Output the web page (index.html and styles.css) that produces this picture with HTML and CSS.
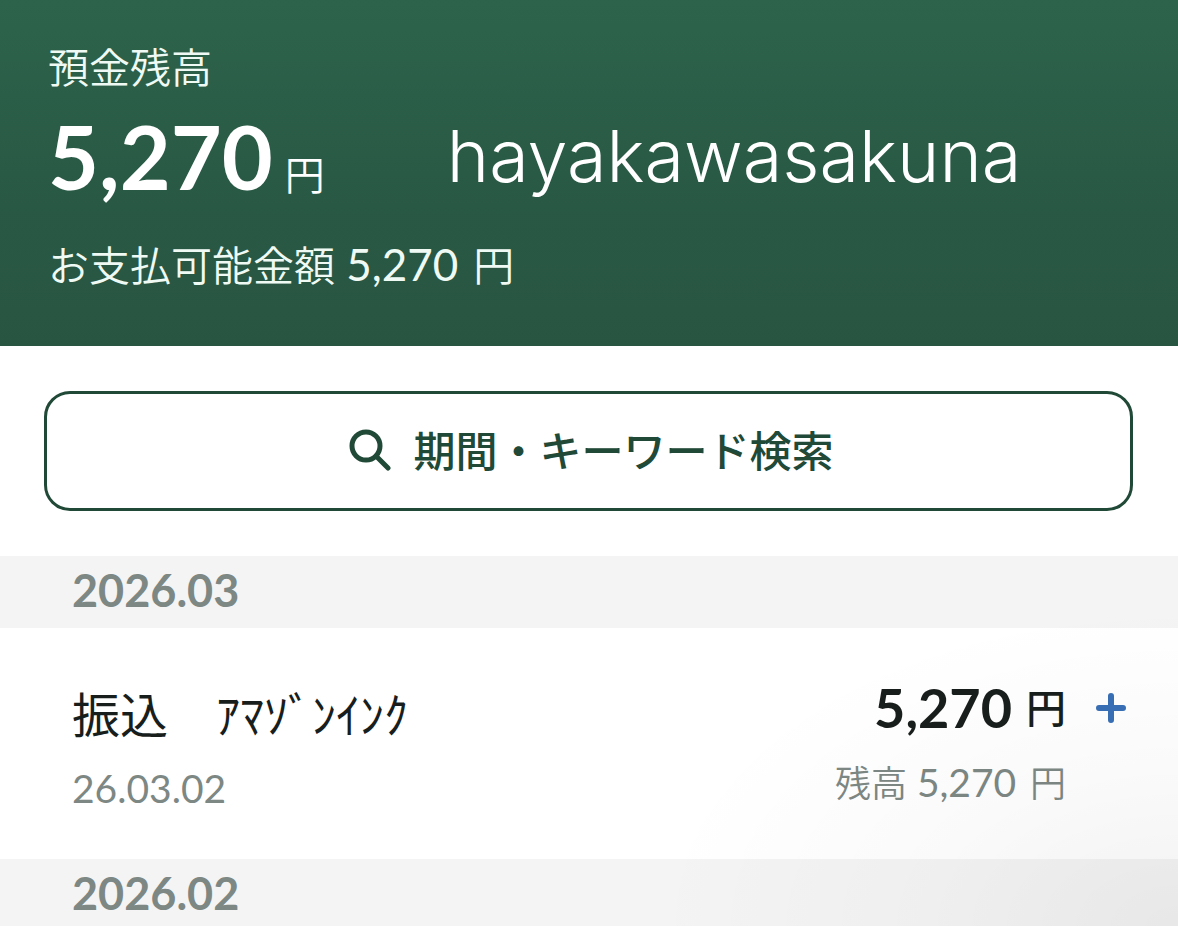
FILE: index.html
```html
<!DOCTYPE html>
<html lang="ja">
<head>
    <meta charset="utf-8">
    <meta name="viewport" content="width=device-width, initial-scale=1">
    <title>預金残高</title>
    <link rel="stylesheet" href="styles.css">
</head>
<body>

<header class="balance">
    <div class="balance-label">預金残高</div>
    <div class="balance-row">
        <div class="balance-amount"><strong>5,270</strong><span class="yen">円</span></div>
        <div class="user-name">hayakawasakuna</div>
    </div>
    <div class="balance-label">お支払可能金額 <span class="num">5,270</span> 円</div>
</header>

<main>
    <div class="search">
        <button type="button" class="search-button">
            <svg class="search-icon" viewBox="0 0 42 42" aria-hidden="true">
                <circle cx="17" cy="17" r="14"/>
                <path d="M27 27L39 39"/>
            </svg>
            期間・キーワード検索
        </button>
    </div>

    <section>
        <h2 class="month">2026.03</h2>
        <div class="entry">
            <div class="entry-info">
                <div class="entry-title">振込　ｱﾏｿﾞﾝｲﾝｸ</div>
                <div class="entry-date">26.03.02</div>
            </div>
            <div class="entry-money">
                <div class="entry-amount"><strong>5,270</strong><span class="yen">円</span></div>
                <div class="entry-rest">残高 <span class="num">5,270</span> 円</div>
            </div>
            <svg class="plus-icon" viewBox="0 0 30 30" aria-hidden="true">
                <path d="M15 3v24M3 15h24"/>
            </svg>
        </div>
    </section>

    <section>
        <h2 class="month">2026.02</h2>
    </section>
</main>

</body>
</html>
```
FILE: styles.css
```css
html, body {
    margin: 0;
    padding: 0;
}
body {
    height: 100vh;
    overflow: hidden;
    background: #fff;
    color: #181e1c;
    font-family: Lato, "Noto Sans CJK JP", sans-serif;
    font-weight: 350;
    position: relative;
}
/* soft shade in the lower right corner */
body::after {
    content: "";
    position: absolute;
    right: 0;
    bottom: 0;
    width: 45%;
    height: 35%;
    background: radial-gradient(ellipse farthest-side at 100% 100%, rgba(0, 0, 0, 0.05), rgba(0, 0, 0, 0.02) 50%, transparent);
    pointer-events: none;
}
.num {
    margin-right: 4px;
    font-family: Lato, sans-serif;
    font-weight: 400;
}

/* balance */
.balance {
    padding: 38px 48px 50px;
    background: linear-gradient(#2d634b, #295a45 50%, #285542);
    color: #fff;
}
.balance-label {
    font-size: 41px;
    line-height: 60px;
    color: #f0faf5;
}
.balance-row {
    display: flex;
    align-items: flex-start;
    gap: 122px;
    height: 136px;
}
.balance-amount {
    display: flex;
    align-items: baseline;
    gap: 12px;
    line-height: 116px;
}
.balance-amount strong {
    font-size: 88px;
    font-weight: 700;
}
.balance-amount .yen {
    font-size: 40px;
}
.balance-label .num {
    font-size: 44px;
}
.user-name {
    font-family: Inter, sans-serif;
    font-size: 72px;
    font-weight: 300;
    line-height: 116px;
}

/* search */
.search {
    padding: 45px 45px 45px 44px;
}
.search-button {
    display: flex;
    align-items: center;
    justify-content: center;
    gap: 22px;
    width: 100%;
    height: 120px;
    padding: 0 0 6px 6px;
    border: 3px solid #214937;
    border-radius: 26px;
    background: #fff;
    color: #214937;
    font-family: "Noto Sans CJK JP", sans-serif;
    font-size: 42px;
    font-weight: 500;
    cursor: pointer;
}
.search-icon {
    width: 42px;
    height: 42px;
    margin-top: 4px;
    fill: none;
    stroke: currentColor;
    stroke-width: 5;
    stroke-linecap: round;
}

/* entries */
.month {
    margin: 0;
    padding: 0 72px 4px;
    background: #f4f4f4;
    color: #7d8783;
    font-size: 45px;
    font-weight: 700;
    line-height: 68px;
}
.entry {
    display: flex;
    padding: 44px 52px 35px 72px;
}
.entry-info {
    flex: 1;
}
.entry-title {
    font-family: "Noto Sans CJK JP", sans-serif;
    font-size: 48px;
    font-weight: 400;
    line-height: 80px;
}
.entry-date {
    font-size: 39px;
    font-weight: 400;
    line-height: 72px;
    color: #7d8783;
}
.entry-amount {
    display: flex;
    align-items: center;
    justify-content: flex-end;
    gap: 14px;
    line-height: 72px;
}
.entry-amount strong {
    font-size: 54px;
    font-weight: 700;
}
.entry-amount .yen {
    font-size: 40px;
    font-weight: 500;
}
.entry-rest {
    font-size: 36px;
    line-height: 76px;
    text-align: right;
    color: #7d8783;
}
.entry-rest .num {
    font-size: 39px;
}
.plus-icon {
    width: 30px;
    height: 30px;
    margin: 21px 0 0 30px;
    fill: none;
    stroke: #386fb6;
    stroke-width: 6;
    stroke-linecap: round;
}
```
